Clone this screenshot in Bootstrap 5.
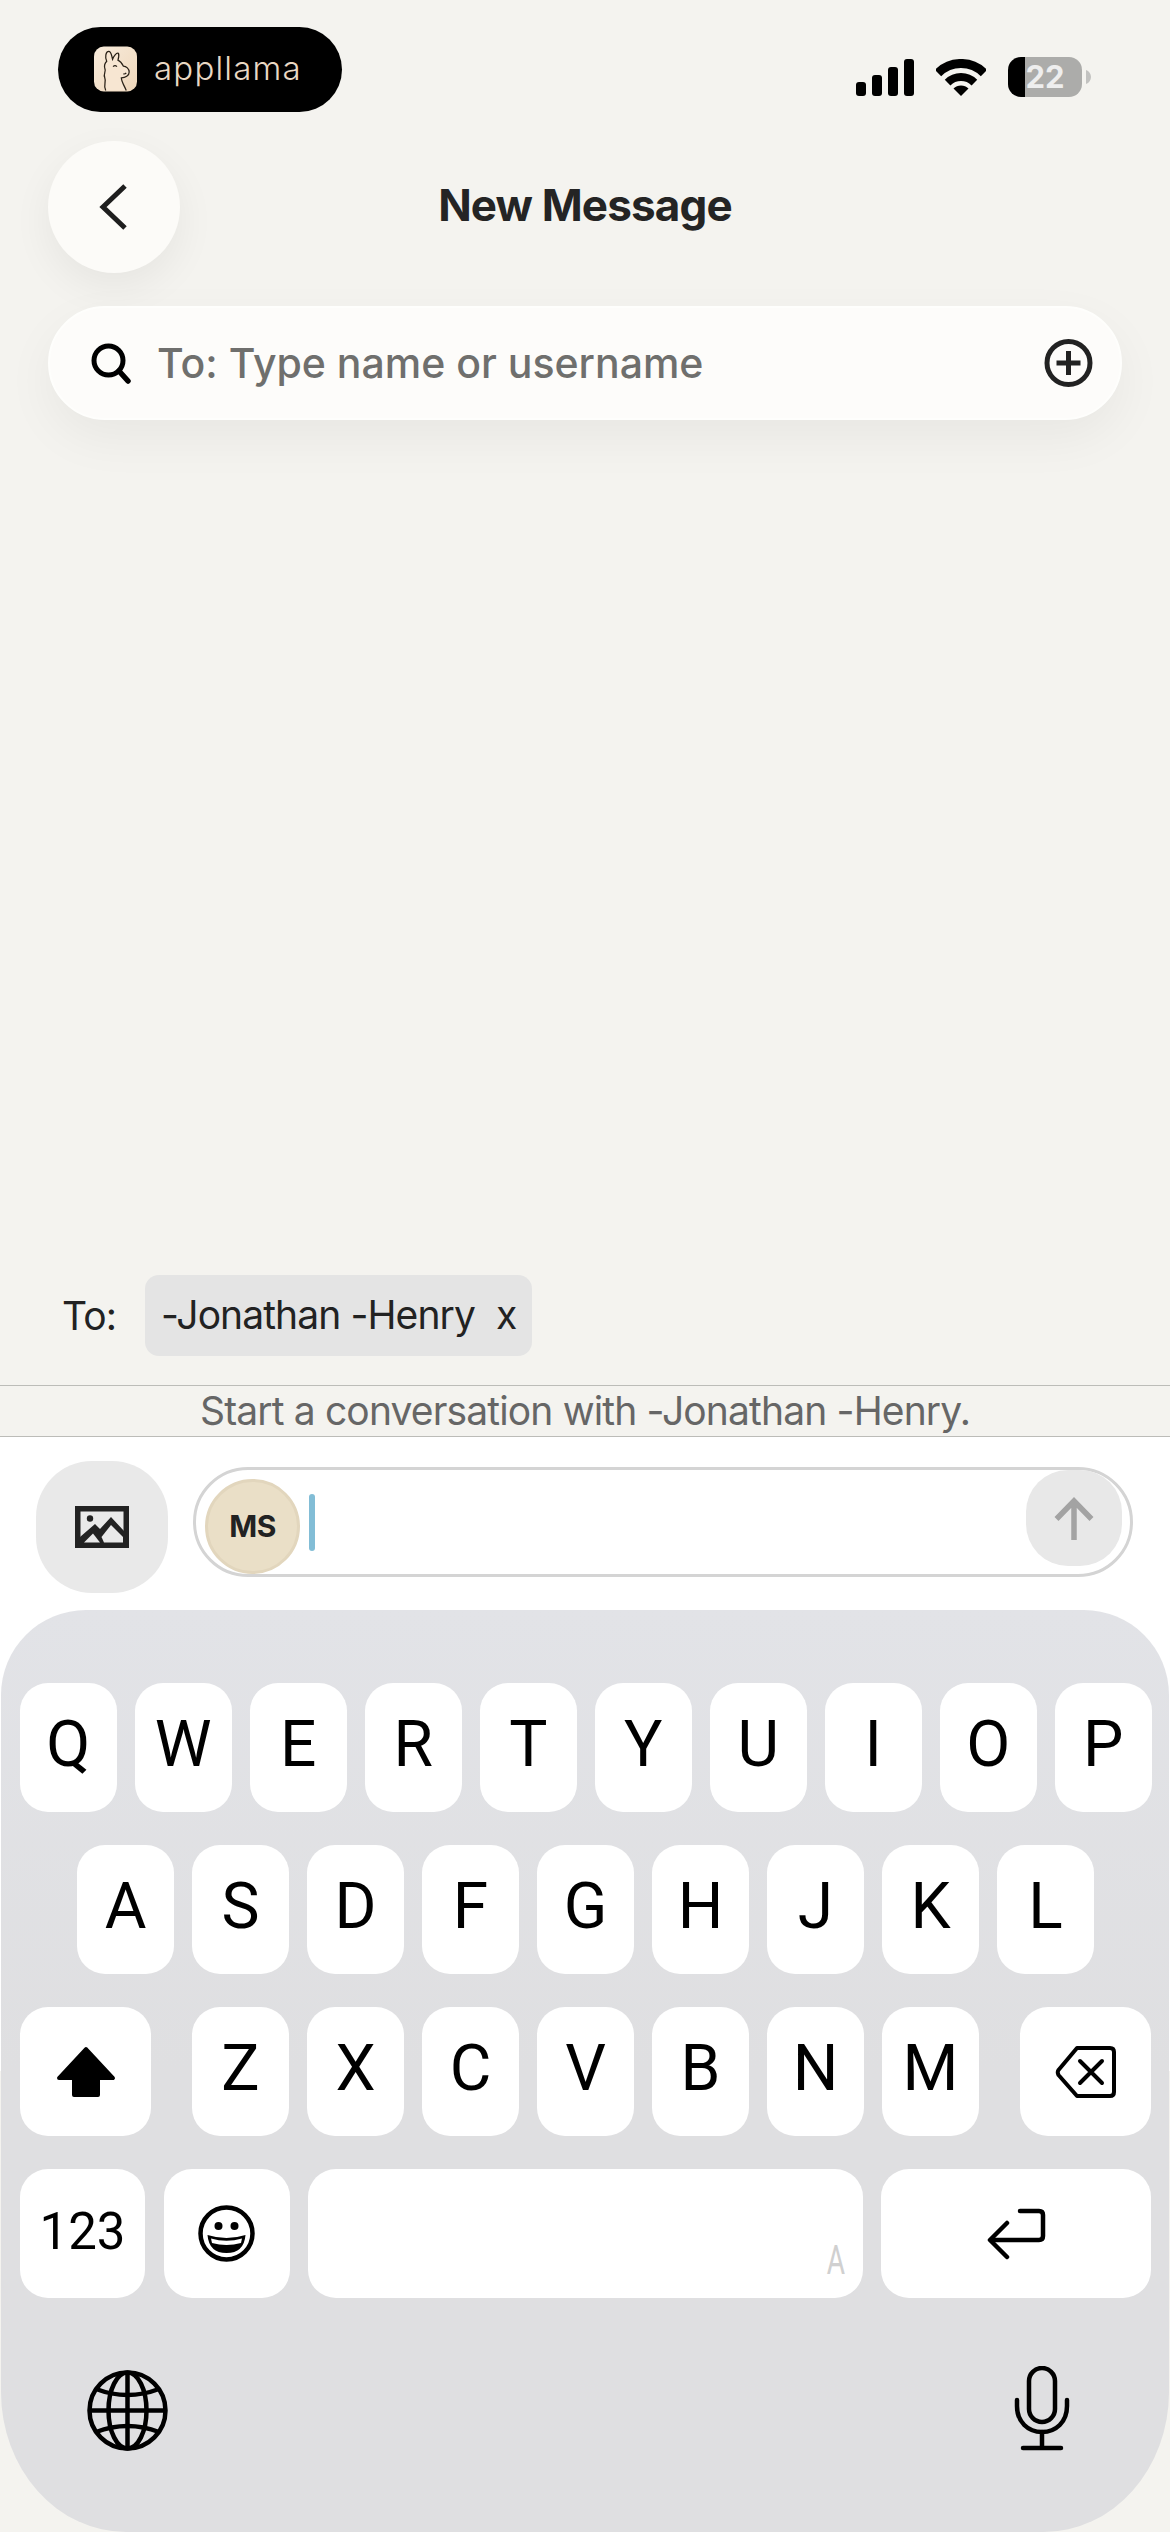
<!DOCTYPE html>
<html lang="en">
<head>
    <meta charset="UTF-8">
    <meta name="viewport" content="width=device-width, initial-scale=1.0">
    <title>New Message</title>
    <link href="https://cdn.jsdelivr.net/npm/bootstrap@5.3.0/dist/css/bootstrap.min.css" rel="stylesheet">
    <style>
        body {
            width: 1170px;
            height: 2532px;
            overflow: hidden;
            background-color: #f4f3ef;
            font-family: Inter, "Liberation Sans", sans-serif;
            color: #222;
        }
        .status-row { padding: 27px 79px 0 58px; height: 112px; }
        .brand-pill { width: 284px; height: 85px; background: #000; padding-left: 36px; padding-bottom: 2px; }
        .brand-name { font-family: Inter, sans-serif; font-weight: 300; font-size: 33px; line-height: 1; color: #e9d8c4; margin-left: 17px; letter-spacing: 1.2px; }
        .status-icons { padding-top: 32px; gap: 22px; }
        .cell-wrap { height: 40px; margin-top: -2px; gap: 4px; }
        .cell-battery { width: 74px; height: 40px; border-radius: 13px; background: linear-gradient(90deg, #000 23%, #acacaa 23%); color: #eee; font-size: 31px; font-weight: 700; line-height: 40px; text-align: center; }
        .head-row { display: grid; grid-template-columns: 132px 1fr 132px; margin-top: 29px; padding: 0 48px; }
        .back-btn { width: 132px; height: 132px; background: #fcfbf8; box-shadow: 0 14px 40px rgba(0, 0, 0, .06); }
        .back-btn:hover { background: #fcfbf8; }
        .head-title { font-size: 44px; font-weight: 700; letter-spacing: -.85px; color: #242424; line-height: 129px; }
        .search-bar { height: 114px; margin: 33px 48px 0; padding: 0 27px 0 41px; background: #fdfcfa; border: 2px solid #fefefc; box-shadow: 0 18px 50px rgba(0, 0, 0, .05); }
        .search-hint { font-size: 41px; font-weight: 500; color: #6f6f6d; margin-left: 26px; padding-top: 2px; }
        .to-row { height: 110px; padding: 0 0 29px 62px; }
        .to-label { font-size: 39px; letter-spacing: -.9px; line-height: 1; color: #222; width: 83px; }
        .to-chip { height: 81px; padding: 0 16px; background: #e4e4e4; border-radius: 14px; font-size: 39px; letter-spacing: -.9px; color: #222; }
        .chip-x { margin-left: 21px; }
        .start-note { height: 52px; padding-bottom: 2px; border-top: 1px solid #bcbcb8; border-bottom: 1px solid #bcbcb8; font-size: 39px; letter-spacing: -.85px; line-height: 1; color: #666; }
        .composer { height: 173px; padding: 24px 0 0 36px; gap: 25px; }
        .media-btn { width: 132px; height: 132px; border-radius: 56px; background: #e9e9e9; }
        .media-btn:hover { background: #e9e9e9; }
        .msg-field { width: 940px; height: 110px; margin-top: 6px; border: 3px solid #d4d4d4; padding-right: 8px; }
        .avatar-ms { width: 95px; height: 95px; margin: 9px 0 0 9px; background: #eadfc7; border: 3px solid #e2d6bd; font-size: 30px; font-weight: 700; letter-spacing: -.5px; color: #222; }
        .msg-caret { width: 6px; height: 57px; margin: 24px 0 0 9px; background: #82bdd6; border-radius: 3px; }
        .send-btn { width: 96px; height: 96px; border-radius: 42px; background: #e8e8e8; }
        .send-btn:hover { background: #e8e8e8; }
        .kb-wrap { height: 922px; background: linear-gradient(#fff 50%, #f4f3ef 50%); padding: 0 1px; }
        .kb-panel { height: 922px; padding: 73px 18px 0 19px; background: linear-gradient(#e2e3e7, #dfdfe1 50%); border-radius: 85px 85px 125px 125px / 85px 85px 140px 140px; gap: 33px; }
        .kb-row { gap: 18.5px; }
        .kb-key { width: 96.5px; height: 129px; flex: none; background: #fff; border-radius: 28px; font-family: Roboto, sans-serif; font-size: 64px; line-height: 1; color: #000; padding-bottom: 6px; }
        .kb-shift { width: 131px; padding-bottom: 0; }
        .kb-digits { width: 125px; font-size: 51px; padding-bottom: 4px; }
        .kb-emoji { width: 126px; padding-bottom: 0; }
        .kb-space { flex: 1 1 auto; width: auto; padding: 0 17px 17px 0; }
        .space-mark { font-size: 40px; color: #d0d0d0; transform: scaleX(.7); transform-origin: right center; }
        .kb-return { width: 270px; padding-bottom: 0; }
        .kb-tools { padding: 35px 81px 0 67px; }
    </style>
</head>
<body class="d-flex flex-column">
    <div class="status-row d-flex justify-content-between flex-shrink-0">
        <div class="brand-pill rounded-pill d-flex align-items-center">
            <svg width="43" height="46" viewBox="0 0 44 46">
                <defs>
                    <linearGradient id="tileFill" x1="0" y1="0" x2="1" y2="1">
                        <stop offset="0" stop-color="#f8ecdc"/>
                        <stop offset="1" stop-color="#eed6ba"/>
                    </linearGradient>
                </defs>
                <rect width="44" height="46" rx="10" fill="url(#tileFill)"/>
                <path d="M12 45C9 39 13 37 11 32C9 28 13 26 11 22C10 18 12 16 13 15C11 11 12 5 15 5C18 5 18 10 19 13C20 10 23 6 25 7C26 9 25 12 24.5 14C27 15 29 18 30 20C33 20 36 23 36 26C36 30 32 32 28 32C28 36 31 40 33 45" fill="#f7e6d2" stroke="#2a2218" stroke-width="1.3"/>
                <path d="M19.500 20.500q2-2 4 0M30 28q2 .5 3-1" fill="none" stroke="#2a2218" stroke-width="1.2"/>
            </svg>
            <span class="brand-name">appllama</span>
        </div>
        <div class="status-icons d-flex">
            <svg width="58" height="37" viewBox="0 0 58 37">
                <rect x="0" y="23" width="10" height="14" rx="3"/>
                <rect x="16" y="16" width="10" height="21" rx="3"/>
                <rect x="32" y="8" width="10" height="29" rx="3"/>
                <rect x="48" y="0" width="10" height="37" rx="3"/>
            </svg>
            <svg width="50" height="37" viewBox="0 0 50 37">
                <path d="M2 14A32.500 32.500 0 0 1 48 14" fill="none" stroke="#000" stroke-width="9"/>
                <path d="M11.600 23.600A19 19 0 0 1 38.400 23.600" fill="none" stroke="#000" stroke-width="8"/>
                <path d="M25 37L17.500 29.500A10.600 10.600 0 0 1 32.500 29.500Z"/>
            </svg>
            <div class="cell-wrap d-flex align-items-center">
                <div class="cell-battery">22</div>
                <svg width="5" height="14" viewBox="0 0 5 14"><path d="M0 0C3 1 5 4 5 7C5 10 3 13 0 14Z" fill="#c2c2c0"/></svg>
            </div>
        </div>
    </div>

    <div class="head-row flex-shrink-0">
        <button type="button" class="back-btn btn border-0 rounded-circle d-flex align-items-center justify-content-center p-0">
            <svg width="34" height="50" viewBox="0 0 34 50" class="me-1">
                <path d="M30 4L8 25L30 46" fill="none" stroke="#1e1e1e" stroke-width="5"/>
            </svg>
        </button>
        <div class="head-title text-center">New Message</div>
    </div>

    <div class="search-bar rounded-pill d-flex align-items-center flex-shrink-0">
        <svg width="40" height="41" viewBox="0 0 40 41" class="flex-shrink-0">
            <circle cx="17.500" cy="17.500" r="14.500" fill="none" stroke="#000" stroke-width="5"/>
            <path d="M28 28L37 38" stroke="#000" stroke-width="5.500" stroke-linecap="round"/>
        </svg>
        <span class="search-hint flex-grow-1">To: Type name or username</span>
        <svg width="49" height="48" viewBox="0 0 49 48" class="flex-shrink-0">
            <circle cx="24.500" cy="24" r="21.500" fill="none" stroke="#222" stroke-width="5"/>
            <path d="M24.500 12V36M12.500 24H36.500" stroke="#222" stroke-width="5"/>
        </svg>
    </div>

    <div class="flex-grow-1"></div>

    <div class="to-row d-flex align-items-center flex-shrink-0">
        <span class="to-label">To:</span>
        <div class="to-chip d-flex align-items-center"><span>-Jonathan -Henry</span><span class="chip-x">x</span></div>
    </div>

    <div class="start-note d-flex align-items-center justify-content-center flex-shrink-0">Start a conversation with -Jonathan -Henry.</div>

    <div class="composer bg-white d-flex align-items-start flex-shrink-0">
        <button type="button" class="media-btn btn border-0 d-flex align-items-center justify-content-center p-0">
            <svg width="54" height="42" viewBox="0 0 54 42">
                <rect x="2.750" y="2.750" width="48.500" height="36.500" fill="none" stroke="#222" stroke-width="5.500"/>
                <circle cx="15" cy="12.500" r="3.200" fill="#222"/>
                <path d="M5 31L20 18L25 23L36 11L49 25V37H5Z" fill="#222"/>
                <path d="M9 36.500L18 27.500L25 36.500Z" fill="#e9e9e9"/>
                <path d="M29 36.500L26.500 31L36 19L48 31V36.500Z" fill="#e9e9e9"/>
            </svg>
        </button>
        <div class="msg-field rounded-pill d-flex align-items-start justify-content-between">
            <div class="d-flex align-items-start">
                <div class="avatar-ms rounded-circle d-flex align-items-center justify-content-center flex-shrink-0">MS</div>
                <div class="msg-caret"></div>
            </div>
            <button type="button" class="send-btn btn border-0 d-flex align-items-center justify-content-center p-0">
                <svg width="40" height="43" viewBox="0 0 40 43">
                    <path d="M20 43V4M2.500 22L20 4L37.500 22" fill="none" stroke="#a3a3a3" stroke-width="5.500"/>
                </svg>
            </button>
        </div>
    </div>

    <div class="kb-wrap flex-shrink-0">
        <div class="kb-panel d-flex flex-column">
            <div class="kb-row d-flex">
                <div class="kb-key d-flex align-items-center justify-content-center">Q</div>
                <div class="kb-key d-flex align-items-center justify-content-center">W</div>
                <div class="kb-key d-flex align-items-center justify-content-center">E</div>
                <div class="kb-key d-flex align-items-center justify-content-center">R</div>
                <div class="kb-key d-flex align-items-center justify-content-center">T</div>
                <div class="kb-key d-flex align-items-center justify-content-center">Y</div>
                <div class="kb-key d-flex align-items-center justify-content-center">U</div>
                <div class="kb-key d-flex align-items-center justify-content-center">I</div>
                <div class="kb-key d-flex align-items-center justify-content-center">O</div>
                <div class="kb-key d-flex align-items-center justify-content-center">P</div>
            </div>
            <div class="kb-row d-flex justify-content-center">
                <div class="kb-key d-flex align-items-center justify-content-center">A</div>
                <div class="kb-key d-flex align-items-center justify-content-center">S</div>
                <div class="kb-key d-flex align-items-center justify-content-center">D</div>
                <div class="kb-key d-flex align-items-center justify-content-center">F</div>
                <div class="kb-key d-flex align-items-center justify-content-center">G</div>
                <div class="kb-key d-flex align-items-center justify-content-center">H</div>
                <div class="kb-key d-flex align-items-center justify-content-center">J</div>
                <div class="kb-key d-flex align-items-center justify-content-center">K</div>
                <div class="kb-key d-flex align-items-center justify-content-center">L</div>
            </div>
            <div class="d-flex justify-content-between">
                <div class="kb-key kb-shift d-flex align-items-center justify-content-center">
                    <svg width="60" height="52" viewBox="0 0 60 52">
                        <path d="M30 3L57 32H42V49H18V32H3Z" stroke="#000" stroke-width="4" stroke-linejoin="round"/>
                    </svg>
                </div>
                <div class="kb-row d-flex">
                    <div class="kb-key d-flex align-items-center justify-content-center">Z</div>
                    <div class="kb-key d-flex align-items-center justify-content-center">X</div>
                    <div class="kb-key d-flex align-items-center justify-content-center">C</div>
                    <div class="kb-key d-flex align-items-center justify-content-center">V</div>
                    <div class="kb-key d-flex align-items-center justify-content-center">B</div>
                    <div class="kb-key d-flex align-items-center justify-content-center">N</div>
                    <div class="kb-key d-flex align-items-center justify-content-center">M</div>
                </div>
                <div class="kb-key kb-shift d-flex align-items-center justify-content-center">
                    <svg width="61" height="52" viewBox="0 0 61 52" fill="none" stroke="#000" stroke-width="4" stroke-linecap="round" stroke-linejoin="round">
                        <path d="M22 2H55Q59 2 59 6V46Q59 50 55 50H22L3.500 29Q2 26 3.500 24Z"/>
                        <path d="M25 15L47 37M47 15L25 37"/>
                    </svg>
                </div>
            </div>
            <div class="kb-row d-flex">
                <div class="kb-key kb-digits d-flex align-items-center justify-content-center">123</div>
                <div class="kb-key kb-emoji d-flex align-items-center justify-content-center">
                    <svg width="57" height="57" viewBox="0 0 57 57">
                        <circle cx="28.500" cy="28.500" r="26" fill="none" stroke="#000" stroke-width="4.500"/>
                        <circle cx="20.500" cy="21" r="4"/>
                        <circle cx="36.500" cy="21" r="4"/>
                        <path d="M9.500 30Q28.500 36 47.500 30Q46 48 28.500 48Q11 48 9.500 30Z"/>
                        <path d="M13 33.500Q28.500 38 44 33.500L43 38Q28.500 42 14 38Z" fill="#fff"/>
                    </svg>
                </div>
                <div class="kb-key kb-space d-flex align-items-end justify-content-end"><span class="space-mark">A</span></div>
                <div class="kb-key kb-return d-flex align-items-center justify-content-center">
                    <svg width="59" height="52" viewBox="0 0 59 52" fill="none" stroke="#000" stroke-width="4.500" stroke-linecap="round" stroke-linejoin="round">
                        <path d="M33 3H52Q56 3 56 7V28Q56 32 52 32H4"/>
                        <path d="M20 15L3 32L20 49"/>
                    </svg>
                </div>
            </div>
            <div class="kb-tools d-flex justify-content-between align-items-start">
                <svg width="81" height="81" viewBox="0 0 81 81" fill="none" stroke="#000" stroke-width="4.500" class="mt-1">
                    <circle cx="40.500" cy="40.500" r="38"/>
                    <ellipse cx="40.500" cy="40.500" rx="19" ry="38"/>
                    <path d="M40.500 2V79M2 40.500H79"/>
                    <path d="M9 19Q40.500 31 72 19M9 62Q40.500 50 72 62"/>
                </svg>
                <svg width="56" height="85" viewBox="0 0 56 85" fill="none" stroke="#000" stroke-width="4.500" stroke-linecap="round">
                    <rect x="15" y="2" width="26" height="54" rx="13"/>
                    <path d="M3 34V40C3 56 14 66 28 66C42 66 53 56 53 40V34"/>
                    <path d="M28 66V82M9 82H47"/>
                </svg>
            </div>
        </div>
    </div>

    <script src="https://cdn.jsdelivr.net/npm/bootstrap@5.3.0/dist/js/bootstrap.bundle.min.js"></script>
</body>
</html>
